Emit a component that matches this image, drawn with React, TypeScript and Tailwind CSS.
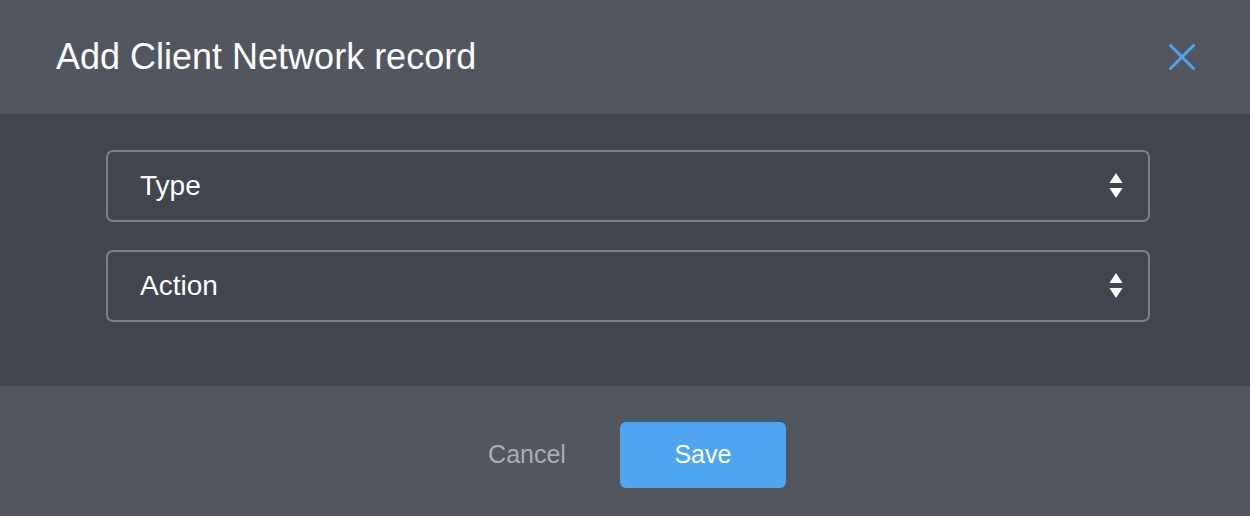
import React from "react";

function Arrows() {
  return (
    <svg width="14" height="26" viewBox="0 0 14 26" className="shrink-0">
      <polygon points="7,0 13.5,10 0.5,10" fill="#ffffff" />
      <polygon points="0.5,15 13.5,15 7,25" fill="#ffffff" />
    </svg>
  );
}

function SelectBox({ label }: { label: string }) {
  return (
    <div className="flex h-[72px] items-center justify-between rounded-[7px] border-2 border-[#7b8089] bg-[#40454e] pl-[32px] pr-[25px]">
      <span className="text-[28px] leading-none text-white">{label}</span>
      <Arrows />
    </div>
  );
}

export default function App() {
  return (
    <div
      className="flex h-[516px] w-[1250px] flex-col overflow-hidden bg-[#51565f]"
      style={{ fontFamily: '"Liberation Sans", Arial, Helvetica, sans-serif' }}
    >
      <div className="flex h-[114px] shrink-0 items-center justify-between rounded-tl-[6px] bg-[#51565f] pl-[56px] pr-[55px]">
        <h1 className="text-[36px] leading-none text-white">Add Client Network record</h1>
        <svg width="26" height="26" viewBox="0 0 26 26">
          <path d="M1.5 1.5 L24.5 24.5 M24.5 1.5 L1.5 24.5" stroke="#4fa3ef" strokeWidth="3" strokeLinecap="square" fill="none" />
        </svg>
      </div>
      <div className="flex h-[272px] shrink-0 flex-col gap-[28px] bg-[#40454e] pl-[106px] pr-[100px] pt-[36px]">
        <SelectBox label="Type" />
        <SelectBox label="Action" />
      </div>
      <div className="flex flex-1 justify-center gap-[54px] bg-[#51565f] pl-[24px] pt-[36px]">
        <button className="h-[66px] text-[25px] text-[#a9adb5]">Cancel</button>
        <button className="h-[66px] w-[166px] rounded-[6px] bg-[#4fa5ef] text-[25px] text-white">Save</button>
      </div>
    </div>
  );
}
